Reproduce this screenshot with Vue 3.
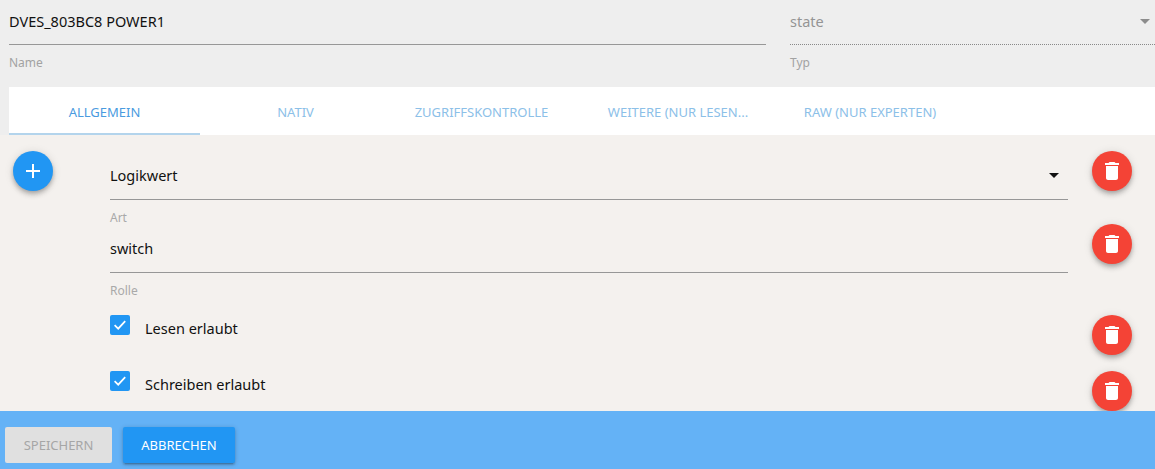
<script setup>
const tabs = [
  { label: 'Allgemein', width: 191, active: true },
  { label: 'Nativ', width: 191 },
  { label: 'Zugriffskontrolle', width: 181 },
  { label: 'Weitere (nur lesen...', width: 212 },
  { label: 'Raw (nur Experten)', width: 172 },
]
const trash = 'M6 19c0 1.1.9 2 2 2h8c1.1 0 2-.9 2-2V7H6v12zM19 4h-3.5l-1-1h-5l-1 1H5v2h14V4z'
</script>

<template>
  <div class="page">
    <header class="head">
      <div class="field name">
        <div class="value">DVES_803BC8 POWER1</div>
        <div class="label">Name</div>
      </div>
      <div class="field type">
        <div class="value muted">state<span class="caret grey"></span></div>
        <div class="label">Typ</div>
      </div>
    </header>

    <nav class="tabs">
      <div
        v-for="t in tabs"
        :key="t.label"
        class="tab"
        :class="{ active: t.active }"
        :style="{ width: t.width + 'px' }"
      >{{ t.label }}</div>
    </nav>

    <main class="content">
      <div class="add-col">
        <button class="fab blue">
          <svg viewBox="0 0 24 24" width="24" height="24"><path d="M19 13h-6v6h-2v-6H5v-2h6V5h2v6h6v2z" fill="#fff" /></svg>
        </button>
      </div>
      <div class="rows">
        <section class="row r1">
          <div class="cell">
            <div class="input">Logikwert<span class="caret"></span></div>
            <div class="hint">Art</div>
          </div>
          <button class="fab red"><svg viewBox="0 0 24 24" width="24" height="24"><path :d="trash" fill="#fff" /></svg></button>
        </section>
        <section class="row r2">
          <div class="cell">
            <div class="input">switch</div>
            <div class="hint">Rolle</div>
          </div>
          <button class="fab red"><svg viewBox="0 0 24 24" width="24" height="24"><path :d="trash" fill="#fff" /></svg></button>
        </section>
        <section class="row r3">
          <div class="cell check">
            <span class="box"><svg viewBox="0 0 20 20" width="20" height="20"><path d="M4.6 10.2l3.6 3.5 7-7.6" fill="none" stroke="#fff" stroke-width="1.7" /></svg></span>
            <span>Lesen erlaubt</span>
          </div>
          <button class="fab red"><svg viewBox="0 0 24 24" width="24" height="24"><path :d="trash" fill="#fff" /></svg></button>
        </section>
        <section class="row r4">
          <div class="cell check">
            <span class="box"><svg viewBox="0 0 20 20" width="20" height="20"><path d="M4.6 10.2l3.6 3.5 7-7.6" fill="none" stroke="#fff" stroke-width="1.7" /></svg></span>
            <span>Schreiben erlaubt</span>
          </div>
          <button class="fab red"><svg viewBox="0 0 24 24" width="24" height="24"><path :d="trash" fill="#fff" /></svg></button>
        </section>
      </div>
    </main>

    <footer class="foot">
      <button class="btn off">Speichern</button>
      <button class="btn on">Abbrechen</button>
    </footer>
  </div>
</template>

<style>
html, body { margin: 0; background: #eeeeee; overflow: hidden; }
</style>

<style scoped>
.page {
  width: 1155px;
  height: 469px;
  overflow: hidden;
  display: flex;
  flex-direction: column;
  font-family: "Noto Sans", "Open Sans", sans-serif;
  color: #111;
  font-size: 14.5px;
}
.head {
  height: 87px;
  box-sizing: border-box;
  display: flex;
  padding-left: 9px;
  gap: 24px;
  background: #eeeeee;
}
.field.name { width: 757px; }
.field.type { flex: 1; }
.value {
  height: 44px;
  line-height: 42px;
  border-bottom: 1px solid #979797;
  position: relative;
}
.value.muted {
  color: #949494;
  border-bottom: 1px dotted #888;
}
.label {
  margin-top: 9px;
  font-size: 12px;
  line-height: 18px;
  color: #a2a2a2;
}
.caret {
  position: absolute;
  right: 5px;
  top: 19px;
  width: 0;
  height: 0;
  border-left: 5px solid transparent;
  border-right: 5px solid transparent;
  border-top: 5px solid #111;
}
.caret.grey { border-top-color: #8c8c8c; right: 5px; }
.tabs {
  height: 48px;
  margin-left: 9px;
  background: #fff;
  display: flex;
}
.tab {
  box-sizing: border-box;
  height: 48px;
  line-height: 50px;
  text-align: center;
  font-size: 13px;
  text-transform: uppercase;
  color: #8cc0e8;
  white-space: nowrap;
}
.tab.active {
  color: #4a9be0;
  border-bottom: 2px solid #b3d4ec;
}
.content {
  height: 276px;
  background: #f4f1ee;
  display: flex;
  overflow: visible;
  position: relative;
}
.add-col {
  width: 110px;
  box-sizing: border-box;
  padding: 16px 0 0 13px;
}
.rows {
  width: 1022px;
  padding-top: 16px;
}
.row {
  display: flex;
  gap: 24px;
  align-items: flex-start;
}
.r1 { height: 73px; }
.r2 { height: 91px; }
.r3 { height: 56px; }
.r4 { height: 40px; }
.cell { width: 958px; }
.input {
  position: relative;
  height: 48px;
  line-height: 48px;
  border-bottom: 1px solid #979797;
}
.r2 .input { line-height: 48px; }
.r1 .caret { top: 22px; right: 9px; border-left-width: 5px; border-right-width: 5px; }
.hint {
  margin-top: 9px;
  font-size: 12px;
  line-height: 18px;
  color: #a9a9a9;
}
.r2 .cell { margin-top: 0; }
.check {
  display: flex;
  align-items: flex-start;
  gap: 15px;
  line-height: 26px;
}
.box {
  width: 20px;
  height: 20px;
  border-radius: 2px;
  background: #2196f3;
  display: block;
}
.box svg { display: block; }
.fab {
  width: 40px;
  height: 40px;
  border: 0;
  padding: 0;
  border-radius: 50%;
  display: flex;
  align-items: center;
  justify-content: center;
  flex: none;
  box-shadow: 0 2px 4px -1px rgba(0,0,0,.2), 0 4px 5px 0 rgba(0,0,0,.14), 0 1px 10px 0 rgba(0,0,0,.12);
}
.fab.blue { background: #2196f3; }
.fab.red { background: #f44336; }
.foot {
  flex: 1;
  background: #64b2f6;
  padding: 16px 0 0 5px;
  display: flex;
  gap: 11px;
  align-items: flex-start;
  position: relative;
}
.btn {
  height: 36px;
  border: 0;
  border-radius: 2px;
  font-family: inherit;
  font-size: 13px;
  text-transform: uppercase;
  padding: 0;
}
.btn.off { width: 107px; background: #e0e0e0; color: #a6a6a6; }
.btn.on {
  width: 112px;
  background: #2196f3;
  color: #fff;
  box-shadow: 0 1px 5px 0 rgba(0,0,0,.2), 0 2px 2px 0 rgba(0,0,0,.14), 0 3px 1px -2px rgba(0,0,0,.12);
}
</style>
